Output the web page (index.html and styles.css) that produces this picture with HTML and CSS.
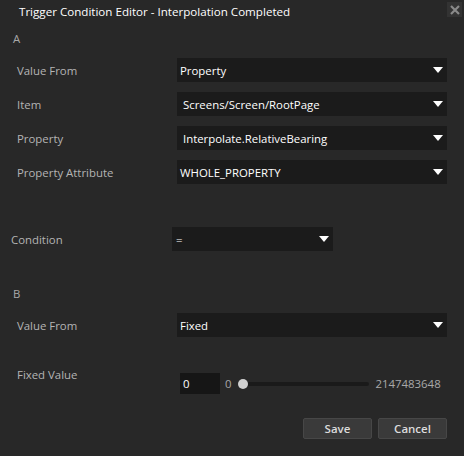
FILE: index.html
```html
<!DOCTYPE html>
<html>
<head>
<meta charset="utf-8">
<link rel="stylesheet" href="styles.css">
</head>
<body>
<div class="dialog">
  <div class="titlebar">
    <span class="title">Trigger Condition Editor - Interpolation Completed</span>
    <span class="close"><svg width="10" height="10" viewBox="0 0 10 10"><path d="M1 1 L9 9 M9 1 L1 9" stroke="#8a8a8a" stroke-width="2.2"/></svg></span>
  </div>

  <div class="group-head head-a">A</div>
  <div class="rows">
    <div class="row"><span class="label">Value From</span><div class="combo"><span class="val">Property</span><span class="arrow"></span></div></div>
    <div class="row"><span class="label">Item</span><div class="combo"><span class="val edit">Screens/Screen/RootPage</span><span class="arrow"></span></div></div>
    <div class="row"><span class="label">Property</span><div class="combo"><span class="val edit">Interpolate.RelativeBearing</span><span class="arrow"></span></div></div>
    <div class="row"><span class="label">Property Attribute</span><div class="combo"><span class="val">WHOLE_PROPERTY</span><span class="arrow"></span></div></div>
  </div>

  <div class="row cond-row"><span class="label cond-label">Condition</span><div class="combo cond"><span class="val eq">=</span><span class="arrow"></span></div></div>

  <div class="group-head head-b">B</div>
  <div class="row row-b"><span class="label">Value From</span><div class="combo"><span class="val">Fixed</span><span class="arrow"></span></div></div>

  <div class="fixed-row">
    <span class="label">Fixed Value</span>
    <div class="slider-group">
      <div class="num-input">0</div>
      <span class="min">0</span>
      <div class="track"><span class="thumb"></span></div>
      <span class="max">2147483648</span>
    </div>
  </div>

  <div class="buttons">
    <button class="btn">Save</button>
    <button class="btn">Cancel</button>
  </div>
</div>
</body>
</html>
```

FILE: styles.css
```css
* { box-sizing: border-box; }
html, body {
  margin: 0;
  padding: 0;
  background: #282828;
}
body {
  width: 464px;
  height: 456px;
  overflow: hidden;
  font-family: "Open Sans", "Noto Sans", sans-serif;
  font-size: 11.4px;
  color: #b9b9b9;
}
.dialog {
  position: relative;
  width: 464px;
  height: 456px;
}
.titlebar {
  height: 22px;
  display: flex;
  align-items: center;
  padding-left: 19px;
}
.title {
  color: #ffffff;
  font-size: 11.6px;
}
.close {
  position: absolute;
  top: 2px;
  left: 447px;
  width: 15px;
  height: 15px;
  background: #333333;
  display: flex;
  align-items: center;
  justify-content: center;
}
.group-head {
  padding-left: 13px;
  height: 16px;
  line-height: 16px;
  color: #a8a8a8;
}
.head-a { margin-top: 9px; }
.rows {
  margin-top: 11px;
  display: flex;
  flex-direction: column;
  gap: 10px;
}
.row {
  display: flex;
  align-items: center;
  height: 24px;
  padding-left: 17px;
}
.label {
  width: 160px;
  flex: none;
  color: #b4b4b4;
}
.combo {
  width: 270px;
  height: 24px;
  background: #1b1b1b;
  display: flex;
  align-items: center;
  justify-content: space-between;
  padding: 0 3px 0 3px;
}
.val {
  color: #ffffff;
}
.val.edit { padding-left: 3px; }
.arrow {
  width: 0;
  height: 0;
  border-left: 5px solid transparent;
  border-right: 5px solid transparent;
  border-top: 6px solid #ffffff;
  margin-right: 1px;
}
.cond-row {
  margin-top: 43px;
  padding-left: 11px;
}
.cond-label { width: 161px; }
.combo.cond { width: 161px; padding-left: 4px; }
.head-b { margin-top: 35px; }
.row-b { margin-top: 11px; }
.fixed-row {
  margin-top: 30px;
  display: flex;
  align-items: flex-start;
  padding-left: 17px;
}
.fixed-row .label {
  width: 163px;
  line-height: 16px;
}
.slider-group {
  margin-top: 6px;
  display: flex;
  align-items: center;
  height: 21px;
}
.num-input {
  width: 40px;
  height: 21px;
  background: #161616;
  color: #ffffff;
  padding-left: 3px;
  line-height: 21px;
}
.min {
  margin-left: 5px;
  color: #a8a8a8;
}
.track {
  position: relative;
  margin-left: 7px;
  width: 130px;
  height: 4px;
  background: #1a1a1a;
  border-radius: 2px;
}
.thumb {
  position: absolute;
  left: -1px;
  top: -3px;
  width: 10px;
  height: 10px;
  border-radius: 50%;
  background: #d0d0d0;
}
.max {
  margin-left: 7px;
  color: #a8a8a8;
}
.buttons {
  position: absolute;
  left: 303px;
  top: 418px;
  display: flex;
  gap: 6px;
}
.btn {
  width: 69px;
  height: 21px;
  background: #3a3a3a;
  border: 1px solid #474747;
  border-radius: 2px;
  color: #dcdcdc;
  font-family: "Open Sans", "Noto Sans", sans-serif;
  font-size: 11.5px;
  font-weight: 600;
  padding: 0;
}
```
